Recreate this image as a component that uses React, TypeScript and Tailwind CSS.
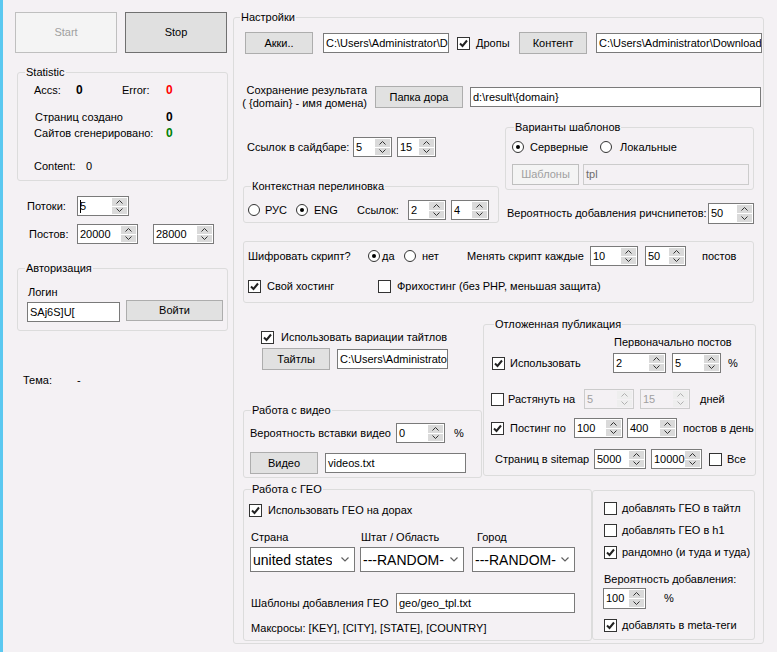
import React from 'react';
import clsx from 'clsx';

type Kids = { children?: React.ReactNode };

function Btn({ c, children, disabled, strong }: Kids & { c: string; disabled?: boolean; strong?: boolean }) {
  return (
    <div
      className={clsx(
        'flex shrink-0 items-center justify-center border whitespace-nowrap',
        disabled
          ? 'border-[#bfbfbf] bg-[#f4f4f4] text-[#a0a0a0]'
          : strong
          ? 'border-[#707070] bg-[#e0e0e0]'
          : 'border-[#adadad] bg-[#e1e1e1]',
        c
      )}
    >
      {children}
    </div>
  );
}

function Tb({ c, v, disabled }: { c: string; v: string; disabled?: boolean }) {
  return (
    <div
      className={clsx(
        'flex shrink-0 items-center overflow-hidden whitespace-nowrap border pl-[2px]',
        disabled ? 'border-[#cccccc] text-[#6d6d6d]' : 'border-[#7a7a7a] bg-white',
        c
      )}
    >
      {v}
    </div>
  );
}

function Chev({ up, color = '#333' }: { up?: boolean; color?: string }) {
  return (
    <svg width="7" height="4" viewBox="0 0 7 4">
      <path d={up ? 'M0.5 3.5 L3.5 0.5 L6.5 3.5' : 'M0.5 0.5 L3.5 3.5 L6.5 0.5'} fill="none" stroke={color} strokeWidth="1" />
    </svg>
  );
}

function Num({ c, v, disabled, caret }: { c: string; v: string; disabled?: boolean; caret?: boolean }) {
  return (
    <div
      className={clsx(
        'flex shrink-0 border',
        disabled ? 'border-[#cccccc] text-[#a0a0a0]' : 'border-[#7a7a7a] bg-white',
        c
      )}
    >
      <div className="flex flex-1 items-center overflow-hidden whitespace-nowrap pl-[2px]">
        {caret && <span className="mr-[-1px] inline-block h-[13px] w-[1px] bg-black" />}
        {v}
      </div>
      <div className="flex w-[16px] shrink-0 flex-col gap-[1px] py-[1px] pr-[1px]">
        <div className={clsx('flex flex-1 items-center justify-center', disabled ? 'bg-[#eeeeee]' : 'bg-[#dadada]')}>
          <Chev up color={disabled ? '#b0b0b0' : '#333'} />
        </div>
        <div className={clsx('flex flex-1 items-center justify-center', disabled ? 'bg-[#eeeeee]' : 'bg-[#dadada]')}>
          <Chev color={disabled ? '#b0b0b0' : '#333'} />
        </div>
      </div>
    </div>
  );
}

function Chk({ on, c }: { on?: boolean; c?: string }) {
  return (
    <div className={clsx('flex h-[13px] w-[13px] shrink-0 items-center justify-center border border-[#333333] bg-white', c)}>
      {on && (
        <svg width="9" height="9" viewBox="0 0 9 9">
          <path d="M1 4.5 L3.5 7 L8 1.5" fill="none" stroke="#222" strokeWidth="2" />
        </svg>
      )}
    </div>
  );
}

function Rad({ on, c }: { on?: boolean; c?: string }) {
  return (
    <div className={clsx('flex h-[12px] w-[12px] shrink-0 items-center justify-center rounded-full border border-[#333333] bg-white', c)}>
      {on && <div className="h-[4px] w-[4px] rounded-full bg-black" />}
    </div>
  );
}

function Sel({ c, v }: { c: string; v: string }) {
  return (
    <div className={clsx('flex shrink-0 items-center justify-between border border-[#7a7a7a] bg-white pl-[2px] pr-[5px] text-[14px] leading-[16px]', c)}>
      <span className="overflow-hidden whitespace-nowrap">{v}</span>
      <svg width="8" height="5" viewBox="0 0 8 5" className="shrink-0">
        <path d="M0.5 0.5 L4 4 L7.5 0.5" fill="none" stroke="#606060" strokeWidth="1.2" />
      </svg>
    </div>
  );
}

function Grp({ label, c, lc, children }: Kids & { label?: string; c: string; lc?: string }) {
  return (
    <fieldset className={clsx('shrink-0 rounded-[3px] border border-[#dcdcdc]', c)}>
      {label && <legend className={clsx('px-[1px] leading-[13px]', lc)}>{label}</legend>}
      {children}
    </fieldset>
  );
}

function LeftCol() {
  return (
    <div className="flex w-[230px] shrink-0 flex-col">
      <div className="ml-[12px] mt-[12px] flex gap-[8px]">
        <Btn c="h-[41px] w-[102px]" disabled>
          Start
        </Btn>
        <Btn c="h-[41px] w-[102px]" strong>
          Stop
        </Btn>
      </div>

      <Grp label="Statistic" c="ml-[14px] mt-[13px] h-[115px] w-[211px]" lc="ml-[7px]">
        <div className="ml-[16px] mt-[5px] flex">
          <span className="w-[42px]">Accs:</span>
          <span className="w-[46px] text-[12px] font-bold">0</span>
          <span className="w-[44px]">Error:</span>
          <span className="text-[12px] font-bold text-[#ff0000]">0</span>
        </div>
        <div className="ml-[17px] mt-[14px] flex">
          <span className="w-[131px]">Страниц создано</span>
          <span className="text-[12px] font-bold">0</span>
        </div>
        <div className="ml-[16px] mt-[3px] flex">
          <span className="w-[132px]">Сайтов сгенерировано:</span>
          <span className="text-[12px] font-bold text-[#008000]">0</span>
        </div>
        <div className="ml-[16px] mt-[20px] flex">
          <span className="w-[52px]">Content:</span>
          <span>0</span>
        </div>
      </Grp>

      <div className="ml-[24px] mt-[15px] flex h-[20px] items-center">
        <span className="w-[50px]">Потоки:</span>
        <Num c="h-[20px] w-[52px]" v="5" caret />
      </div>
      <div className="ml-[26px] mt-[8px] flex h-[20px] items-center">
        <span className="w-[48px]">Постов:</span>
        <Num c="h-[20px] w-[61px]" v="20000" />
        <Num c="ml-[15px] h-[20px] w-[61px]" v="28000" />
      </div>

      <Grp label="Авторизация" c="ml-[14px] mt-[18px] h-[69px] w-[211px]" lc="ml-[7px]">
        <div className="ml-[10px] mt-[11px]">Логин</div>
        <div className="mt-[1px] flex items-start">
          <Tb c="ml-[9px] mt-[2px] h-[20px] w-[93px]" v="SAj6S]U[" />
          <Btn c="ml-[6px] h-[21px] w-[97px]">Войти</Btn>
        </div>
      </Grp>

      <div className="ml-[20px] mt-[43px] flex">
        <span className="w-[54px]">Тема:</span>
        <span>-</span>
      </div>
    </div>
  );
}

function RightCol() {
  return (
    <Grp label="Настройки" c="mt-[11px] h-[633px] w-[531px]" lc="ml-[6px]">
      {/* Row 1 */}
      <div className="mt-[8px] flex h-[22px] items-center">
        <Btn c="ml-[11px] h-[22px] w-[68px]">Акки..</Btn>
        <Tb c="ml-[10px] h-[20px] w-[126px]" v="C:\Users\Administrator\Desktop" />
        <Chk on c="ml-[8px]" />
        <span className="ml-[6px] w-[43px]">Дропы</span>
        <Btn c="h-[22px] w-[68px]">Контент</Btn>
        <Tb c="ml-[9px] h-[20px] w-[166px]" v="C:\Users\Administrator\Downloads\content" />
      </div>

      {/* Row 2 */}
      <div className="mt-[30px] flex h-[26px] items-center">
        <div className="ml-[1px] w-[132px] whitespace-nowrap text-right">
          <div>Сохранение результата</div>
          <div>( {'{domain}'} - имя домена)</div>
        </div>
        <Btn c="ml-[8px] h-[22px] w-[88px]">Папка дора</Btn>
        <Tb c="ml-[7px] h-[20px] w-[291px]" v="d:\result\{domain}" />
      </div>

      {/* Section 3 */}
      <div className="mt-[11px] flex items-start">
        <div className="ml-[9px] flex w-[256px] shrink-0 flex-col">
          <div className="mt-[16px] flex h-[20px] items-center">
            <span className="ml-[4px] w-[106px]">Ссылок в сайдбаре:</span>
            <Num c="h-[20px] w-[39px]" v="5" />
            <Num c="ml-[5px] h-[20px] w-[39px]" v="15" />
          </div>
          <Grp label="Контекстная перелиновка" c="mt-[23px] h-[43px] w-[256px]" lc="ml-[7px]">
            <div className="mt-[7px] flex h-[20px] items-center">
              <Rad c="ml-[4px]" />
              <span className="ml-[5px] w-[31px]">РУС</span>
              <Rad on />
              <span className="ml-[6px] w-[43px]">ENG</span>
              <span className="w-[51px]">Ссылок:</span>
              <Num c="h-[20px] w-[38px]" v="2" />
              <Num c="ml-[5px] h-[20px] w-[38px]" v="4" />
            </div>
          </Grp>
        </div>

        <div className="ml-[6px] flex w-[249px] shrink-0 flex-col">
          <Grp label="Варианты шаблонов" c="h-[69px] w-[249px]" lc="ml-[8px]">
            <div className="mt-[7px] flex h-[12px] items-center">
              <Rad on c="ml-[6px]" />
              <span className="ml-[6px] w-[70px]">Серверные</span>
              <Rad />
              <span className="ml-[8px]">Локальные</span>
            </div>
            <div className="mt-[11px] flex h-[21px] items-center">
              <Btn c="ml-[6px] h-[21px] w-[67px]" disabled>
                Шаблоны
              </Btn>
              <Tb c="ml-[4px] h-[21px] w-[166px]" v="tpl" disabled />
            </div>
          </Grp>
          <div className="mt-[13px] flex h-[21px] items-center">
            <span className="ml-[2px] w-[201px] whitespace-nowrap">Вероятность добавления ричснипетов:</span>
            <Num c="h-[21px] w-[46px]" v="50" />
          </div>
        </div>
      </div>

      {/* Section 4 */}
      <Grp c="ml-[9px] mt-[17px] h-[62px] w-[511px]">
        <div className="mt-[4px] flex h-[20px] items-center whitespace-nowrap">
          <span className="ml-[4px] w-[120px]">Шифровать скрипт?</span>
          <Rad on />
          <span className="ml-[2px] w-[22px]">да</span>
          <Rad />
          <span className="ml-[6px] w-[45px]">нет</span>
          <span className="w-[123px]">Менять скрипт каждые</span>
          <Num c="h-[20px] w-[48px]" v="10" />
          <Num c="ml-[7px] h-[20px] w-[41px]" v="50" />
          <span className="ml-[16px]">постов</span>
        </div>
        <div className="mt-[14px] flex h-[13px] items-center whitespace-nowrap">
          <Chk on c="ml-[4px]" />
          <span className="ml-[6px] w-[111px]">Свой хостинг</span>
          <Chk />
          <span className="ml-[6px]">Фрихостинг (без PHP, меньшая защита)</span>
        </div>
      </Grp>

      {/* Section 5 */}
      <div className="mt-[15px] flex items-start">
        <div className="ml-[9px] flex w-[239px] shrink-0 flex-col">
          <div className="mt-[13px] flex h-[13px] items-center whitespace-nowrap">
            <Chk on c="ml-[18px]" />
            <span className="ml-[7px]">Использовать вариации тайтлов</span>
          </div>
          <div className="mt-[4px] flex h-[22px] items-center">
            <Btn c="ml-[19px] h-[22px] w-[68px]">Тайтлы</Btn>
            <Tb c="ml-[7px] h-[20px] w-[111px]" v="C:\Users\Administrator\Desktop\titles.txt" />
          </div>
          <Grp label="Работа с видео" c="mt-[34px] h-[74px] w-[239px]" lc="ml-[7px]">
            <div className="mt-[6px] flex h-[20px] items-center whitespace-nowrap">
              <span className="ml-[6px] w-[146px]">Вероятность вставки видео</span>
              <Num c="h-[20px] w-[49px]" v="0" />
              <span className="ml-[9px]">%</span>
            </div>
            <div className="mt-[9px] flex h-[22px] items-center">
              <Btn c="ml-[6px] h-[22px] w-[68px]">Видео</Btn>
              <Tb c="ml-[7px] h-[20px] w-[141px]" v="videos.txt" />
            </div>
          </Grp>
        </div>

        <Grp label="Отложенная публикация" c="ml-[1px] h-[158px] w-[273px]" lc="ml-[10px]">
          <div className="ml-[130px] mt-[5px] whitespace-nowrap">Первоначально постов</div>
          <div className="mt-[4px] flex h-[20px] items-center whitespace-nowrap">
            <Chk on c="ml-[8px]" />
            <span className="ml-[5px] w-[103px]">Использовать</span>
            <Num c="h-[20px] w-[53px]" v="2" />
            <Num c="ml-[6px] h-[20px] w-[49px]" v="5" />
            <span className="ml-[7px]">%</span>
          </div>
          <div className="mt-[16px] flex h-[20px] items-center whitespace-nowrap">
            <Chk c="ml-[7px]" />
            <span className="ml-[4px] w-[76px]">Растянуть на</span>
            <Num c="h-[20px] w-[50px]" v="5" disabled />
            <Num c="ml-[6px] h-[20px] w-[50px]" v="15" disabled />
            <span className="ml-[10px]">дней</span>
          </div>
          <div className="mt-[9px] flex h-[20px] items-center whitespace-nowrap">
            <Chk on c="ml-[7px]" />
            <span className="ml-[6px] w-[64px]">Постинг по</span>
            <Num c="h-[20px] w-[49px]" v="100" />
            <Num c="ml-[4px] h-[20px] w-[50px]" v="400" />
            <span className="ml-[6px]">постов в день</span>
          </div>
          <div className="mt-[11px] flex h-[20px] items-center whitespace-nowrap">
            <span className="ml-[11px] w-[99px]">Страниц в sitemap</span>
            <Num c="h-[20px] w-[52px]" v="5000" />
            <Num c="ml-[5px] h-[20px] w-[51px]" v="10000" />
            <Chk c="ml-[7px]" />
            <span className="ml-[5px]">Все</span>
          </div>
        </Grp>
      </div>

      {/* Section 6 */}
      <div className="mt-[5px] flex items-start">
        <Grp label="Работа с ГЕО" c="ml-[9px] h-[158px] w-[349px]" lc="ml-[7px]">
          <div className="mt-[8px] flex h-[13px] items-center whitespace-nowrap">
            <Chk on c="ml-[5px]" />
            <span className="ml-[6px]">Использовать ГЕО на дорах</span>
          </div>
          <div className="mt-[14px] flex whitespace-nowrap">
            <span className="ml-[7px] w-[110px]">Страна</span>
            <span className="w-[116px]">Штат / Область</span>
            <span>Город</span>
          </div>
          <div className="mt-[3px] flex h-[25px] items-center">
            <Sel c="ml-[6px] h-[25px] w-[105px]" v="united states" />
            <Sel c="ml-[5px] h-[25px] w-[104px]" v="---RANDOM-" />
            <Sel c="ml-[8px] h-[25px] w-[103px]" v="---RANDOM-" />
          </div>
          <div className="mt-[21px] flex h-[20px] items-center whitespace-nowrap">
            <span className="ml-[7px] w-[145px]">Шаблоны добавления ГЕО</span>
            <Tb c="h-[20px] w-[179px]" v="geo/geo_tpl.txt" />
          </div>
          <div className="ml-[7px] mt-[9px] whitespace-nowrap">Максросы: [KEY], [CITY], [STATE], [COUNTRY]</div>
        </Grp>

        <Grp c="mt-[7px] h-[150px] w-[163px]">
          <div className="mt-[11px] flex h-[13px] items-center whitespace-nowrap">
            <Chk c="ml-[11px]" />
            <span className="ml-[5px]">добавлять ГЕО в тайтл</span>
          </div>
          <div className="mt-[9px] flex h-[13px] items-center whitespace-nowrap">
            <Chk c="ml-[11px]" />
            <span className="ml-[5px]">добавлять ГЕО в h1</span>
          </div>
          <div className="mt-[9px] flex h-[13px] items-center whitespace-nowrap">
            <Chk on c="ml-[11px]" />
            <span className="ml-[5px]">рандомно (и туда и туда)</span>
          </div>
          <div className="ml-[11px] mt-[14px] whitespace-nowrap">Вероятность добавления:</div>
          <div className="mt-[2px] flex h-[21px] items-center">
            <Num c="ml-[10px] h-[21px] w-[43px]" v="100" />
            <span className="ml-[18px]">%</span>
          </div>
          <div className="mt-[10px] flex h-[13px] items-center whitespace-nowrap">
            <Chk on c="ml-[11px]" />
            <span className="ml-[5px]">добавлять в meta-теги</span>
          </div>
        </Grp>
      </div>
    </Grp>
  );
}

export default function App() {
  return (
    <div className="flex h-[652px] w-[777px] overflow-hidden bg-[#f4f1f4] font-['Liberation_Sans',Arial,sans-serif] text-[11px] leading-[13px] text-black">
      <div className="w-[3px] shrink-0 bg-[#5bc8f0]" />
      <LeftCol />
      <RightCol />
    </div>
  );
}
